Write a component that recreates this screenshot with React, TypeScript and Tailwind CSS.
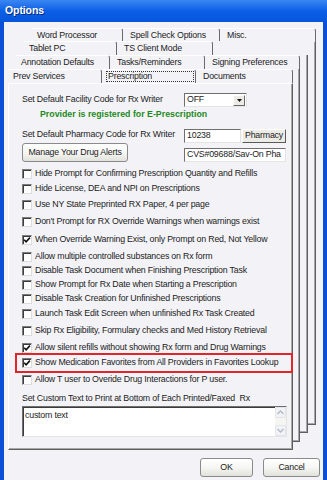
import React from "react";

type Row = { label: string; mt: string; checked?: boolean; highlight?: boolean };

const rows: Row[] = [
  { label: "Hide Prompt for Confirming Prescription Quantity and Refills", mt: "mt-[6px]" },
  { label: "Hide License, DEA and NPI on Prescriptions", mt: "mt-[3px]" },
  { label: "Use NY State Preprinted RX Paper, 4 per page", mt: "mt-[4px]" },
  { label: "Don't Prompt for RX Override Warnings when warnings exist", mt: "mt-[5px]" },
  { label: "When Override Warning Exist, only Prompt on Red, Not Yellow", mt: "mt-[6px]", checked: true },
  { label: "Allow multiple controlled substances on Rx form", mt: "mt-[5px]" },
  { label: "Disable Task Document when Finishing Prescription Task", mt: "mt-[2px]" },
  { label: "Show Prompt for Rx Date when Starting a Prescription", mt: "mt-[2px]" },
  { label: "Disable Task Creation for Unfinished Prescriptions", mt: "mt-[2px]" },
  { label: "Launch Task Edit Screen when unfinished Rx Task Created", mt: "mt-[3px]" },
  { label: "Skip Rx Eligibility, Formulary checks and Med History Retrieval", mt: "mt-[5px]" },
  { label: "Allow silent refills without showing Rx form and Drug Warnings", mt: "mt-[5px]", checked: true },
  {
    label: "Show Medication Favorites from All Providers in Favorites Lookup",
    mt: "-mt-[1px]",
    checked: true,
    highlight: true,
  },
  { label: "Allow T user to Overide Drug Interactions for P user.", mt: "mt-[1px]" },
];

function CheckBox({ checked }: { checked?: boolean }) {
  return (
    <span className="flex h-[10px] w-[10px] shrink-0 items-center justify-center border border-t-[#7c7c7c] border-l-[#7c7c7c] border-b-[#dcdcdc] border-r-[#dcdcdc] bg-white shadow-[inset_1px_1px_0_#3c3c3c]">
      {checked && (
        <svg width="8" height="8" viewBox="0 0 8 8">
          <path d="M1.2 3.8 L3.1 5.8 L6.9 1.6" stroke="#111" strokeWidth="1.6" fill="none" />
        </svg>
      )}
    </span>
  );
}

function Tab({ label, className = "", first }: { label?: string; className?: string; first?: boolean }) {
  return (
    <div
      className={`flex h-full items-center whitespace-nowrap rounded-tr-[3px] border-t border-r border-t-white border-r-[#6a6a6a] ${
        first ? "pl-[5px]" : "pl-[7px]"
      } ${className}`}
    >
      {label}
    </div>
  );
}

function Layer({
  className,
  tabs,
  children,
  front,
}: {
  className: string;
  tabs: React.ReactNode;
  children?: React.ReactNode;
  front?: boolean;
}) {
  return (
    <div className={`flex flex-col [grid-area:1/1] ${className}`}>
      <div className="flex h-[14px] shrink-0 bg-[#f3f3f7]">{tabs}</div>
      <div
        className={`flex-1 border-r border-b border-r-[#5e5e5e] border-b-[#5e5e5e] bg-[#f3f3f7] shadow-[inset_-1px_-1px_0_#a8a8a8] ${
          front ? "border-t border-l border-t-white border-l-white" : ""
        }`}
      >
        {children}
      </div>
    </div>
  );
}

function XpButton({ label, className }: { label: string; className: string }) {
  return (
    <div
      className={`flex items-center justify-center rounded-[3px] border border-[#8a8a8a] bg-gradient-to-b from-white via-[#f6f6f3] to-[#e2e2dc] ${className}`}
    >
      {label}
    </div>
  );
}

function TextBox({ value, className }: { value: string; className: string }) {
  return (
    <div
      className={`flex items-center overflow-hidden whitespace-nowrap border border-t-[#6f6f6f] border-l-[#6f6f6f] border-b-[#e4e4e4] border-r-[#e4e4e4] bg-white pl-[2px] ${className}`}
    >
      {value}
    </div>
  );
}

function Chevron({ up }: { up?: boolean }) {
  return (
    <svg width="7" height="5" viewBox="0 0 7 5">
      <path d={up ? "M0.5 4 L3.5 1 L6.5 4" : "M0.5 1 L3.5 4 L6.5 1"} stroke="#b4b8c4" strokeWidth="1.3" fill="none" />
    </svg>
  );
}

export default function App() {
  return (
    <div className="h-[480px] w-[327px] overflow-hidden bg-[#0a4fd6] font-['Liberation_Sans',Arial,sans-serif] text-[8.8px] tracking-[-0.2px] text-[#1c1c1c]">
      <div className="flex h-[22px] items-center bg-gradient-to-b from-[#3a86f2] via-[#0b5fe6] to-[#0756dc] pl-[5px] text-[10.5px] font-bold tracking-[-0.1px] text-white [text-shadow:1px_1px_0_#0a2a7a]">
        Options
      </div>
      <div className="mx-[4px] flex h-[458px] flex-col bg-[#f3f3f7]">
        <div className="grid h-[428px]">
          <Layer
            className="mt-[6px] mb-[25px] ml-[28px] mr-[7px]"
            tabs={
              <>
                <Tab first label="Word Processor" className="w-[91px]" />
                <Tab label="Spell Check Options" className="w-[97px]" />
                <Tab label="Misc." className="flex-1" />
              </>
            }
          />
          <Layer
            className="mt-[19px] mb-[17px] ml-[20px] mr-[15px]"
            tabs={
              <>
                <Tab first label="Tablet PC" className="w-[93px]" />
                <Tab label="TS Client Mode" className="w-[96px]" />
              </>
            }
          />
          <Layer
            className="mt-[33px] mb-[8px] ml-[12px] mr-[23px]"
            tabs={
              <>
                <Tab first label="Annotation Defaults" className="w-[94px]" />
                <Tab label="Tasks/Reminders" className="w-[95px]" />
                <Tab label="Signing Preferences" className="flex-1" />
              </>
            }
          />
          <Layer
            front
            className="mt-[47px] mb-0 ml-[4px] mr-[30px]"
            tabs={
              <>
                <Tab first label="Prev Services" className="w-[94px]" />
                <div className="flex h-full w-[94px] items-center rounded-tr-[3px] border-t border-r border-t-white border-r-[#6a6a6a] pl-[4px]">
                  <span className="flex h-[11px] w-[88px] items-center border border-dotted border-[#333] pl-[1px]">
                    Prescription
                  </span>
                </div>
                <Tab label="Documents" className="flex-1" />
              </>
            }
          >
            <div className="flex flex-col pt-[9px] pr-[5px] pl-[13px]">
              <div className="grid grid-cols-[162px_1fr]">
                <div className="flex h-[14px] items-center">Set Default Facility Code for Rx Writer</div>
                <div className="flex h-[14px] w-[63px] items-center border border-t-[#6f6f6f] border-l-[#6f6f6f] border-b-[#e4e4e4] border-r-[#e4e4e4] bg-white">
                  <span className="flex-1 pl-[2px]">OFF</span>
                  <span className="mr-[1px] flex h-[11px] w-[12px] items-center justify-center border border-t-white border-l-white border-b-[#6a6a6a] border-r-[#6a6a6a] bg-[#ecebe6]">
                    <svg width="5" height="3" viewBox="0 0 5 3">
                      <path d="M0 0 H5 L2.5 3 Z" fill="#111" />
                    </svg>
                  </span>
                </div>
              </div>
              <div className="mt-[2px] ml-[18px] flex h-[12px] items-center font-bold tracking-[0px] text-[#1d8a1d]">
                Provider is registered for E-Prescription
              </div>
              <div className="mt-[8px] grid grid-cols-[162px_102px]">
                <div className="flex flex-col">
                  <div className="flex h-[12px] items-center">Set Default Pharmacy Code for Rx Writer</div>
                  <XpButton label="Manage Your Drug Alerts" className="mt-[2px] h-[19px] w-[106px]" />
                </div>
                <div className="flex flex-col">
                  <div className="flex h-[14px]">
                    <TextBox value="10238" className="w-[57px]" />
                    <div className="ml-[1px] flex flex-1 items-center justify-center border border-t-white border-l-white border-b-[#5a5a5a] border-r-[#5a5a5a] bg-[#ecebe6]">
                      Pharmacy
                    </div>
                  </div>
                  <TextBox value="CVS#09688/Sav-On Pha" className="mt-[5px] h-[14px]" />
                </div>
              </div>

              {rows.map((row) =>
                row.highlight ? (
                  <div
                    key={row.label}
                    className={`${row.mt} -mr-[6px] -ml-[7px] flex h-[20px] items-center gap-[3px] border-2 border-[#e0262b] pl-[5px] whitespace-nowrap`}
                  >
                    <CheckBox checked={row.checked} />
                    <span>{row.label}</span>
                  </div>
                ) : (
                  <div key={row.label} className={`${row.mt} flex h-[12px] items-center gap-[3px] whitespace-nowrap`}>
                    <CheckBox checked={row.checked} />
                    <span>{row.label}</span>
                  </div>
                )
              )}

              <div className="mt-[7px] flex h-[12px] items-center whitespace-nowrap">
                Set Custom Text to Print at Bottom of Each Printed/Faxed&nbsp; Rx
              </div>
              <div className="mt-[1px] flex h-[31px] border border-t-[#6f6f6f] border-l-[#6f6f6f] border-b-[#e4e4e4] border-r-[#e4e4e4] bg-white shadow-[inset_1px_1px_0_#3c3c3c]">
                <div className="flex-1 pt-[2px] pl-[2px]">custom text</div>
                <div className="flex w-[11px] flex-col bg-[#f5f5f2]">
                  <div className="flex h-[11px] items-center justify-center rounded-[2px] border border-[#e2e4ea] bg-[#f2f3f6]">
                    <Chevron up />
                  </div>
                  <div className="flex-1" />
                  <div className="flex h-[11px] items-center justify-center rounded-[2px] border border-[#e2e4ea] bg-[#f2f3f6]">
                    <Chevron />
                  </div>
                </div>
              </div>
            </div>
          </Layer>
        </div>
        <div className="mt-[8px] flex justify-end gap-[10px] pr-[3px]">
          <XpButton label="OK" className="h-[19px] w-[53px]" />
          <XpButton label="Cancel" className="h-[19px] w-[57px]" />
        </div>
      </div>
    </div>
  );
}
